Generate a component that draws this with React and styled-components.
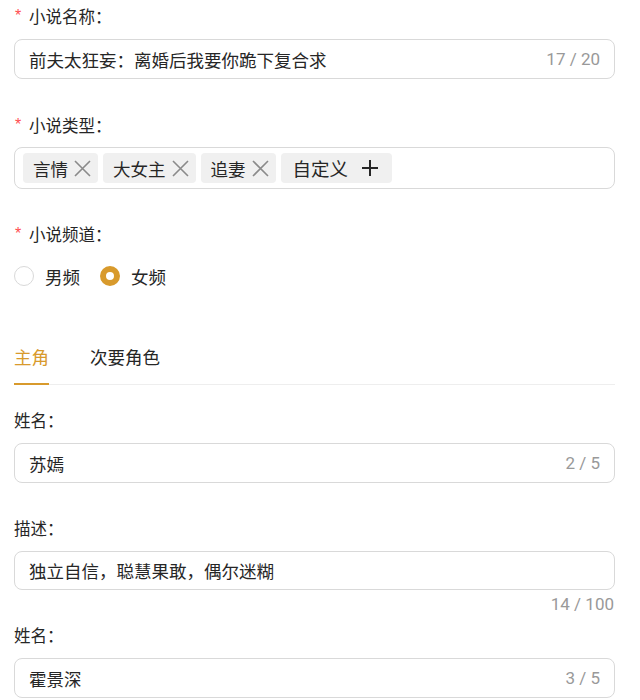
import React, { useState } from 'react';
import styled, { createGlobalStyle } from 'styled-components';

const ORANGE = '#d89a2c';

const GlobalStyle = createGlobalStyle`
  body {
    margin: 0;
    background: #fff;
    font-family: "Noto Sans CJK SC", "Noto Sans", sans-serif;
    color: #262626;
  }
`;

const Page = styled.div`
  width: 601px;
  padding: 4px 25px 0 14px;
`;

const FormItem = styled.div`
  margin-bottom: ${({ gap }) => (gap === undefined ? 34 : gap)}px;
`;

const Label = styled.div`
  font-size: 16.5px;
  line-height: 24px;
  margin-bottom: ${({ gap }) => (gap === undefined ? 11 : gap)}px;
  display: flex;
  align-items: center;
`;

const Star = styled.span`
  color: #ff4d4f;
  font-family: "Liberation Sans", sans-serif;
  font-size: 16px;
  width: 15px;
  padding-left: 1px;
  box-sizing: border-box;
`;

const InputBox = styled.div`
  box-sizing: border-box;
  height: ${({ h }) => h || 40}px;
  border: 1px solid #d9d9d9;
  border-radius: 8px;
  display: flex;
  align-items: center;
  justify-content: space-between;
  padding: 0 14px;
  font-size: 17.5px;
`;

const Value = styled.span`
  color: #262626;
`;

const Count = styled.span`
  font-family: Roboto, "Liberation Sans", sans-serif;
  font-size: 17px;
  color: #999;
`;

const CountBelow = styled.div`
  text-align: right;
  font-family: Roboto, "Liberation Sans", sans-serif;
  font-size: 17px;
  line-height: 22px;
  color: #999;
  margin-top: 3px;
  padding-right: 1px;
`;

const TagBox = styled.div`
  box-sizing: border-box;
  border: 1px solid #d9d9d9;
  border-radius: 8px;
  padding: 5px 8px;
  display: flex;
  gap: 5px;
`;

const Tag = styled.div`
  height: 30px;
  background: #f0f0f0;
  border-radius: 4px;
  display: flex;
  align-items: center;
  padding: 0 ${({ custom }) => (custom ? 13 : 6)}px 0 ${({ custom }) => (custom ? 12 : 10)}px;
  gap: ${({ custom }) => (custom ? 13 : 5)}px;
  font-size: ${({ custom }) => (custom ? 18.5 : 17.5)}px;
  color: #262626;
`;

const RadioRow = styled.div`
  height: 40px;
  display: flex;
  align-items: center;
`;

const RadioItem = styled.label`
  display: flex;
  align-items: center;
  gap: 11px;
  font-size: 17.5px;
  margin-right: 20px;
  cursor: pointer;
`;

const RadioCircle = styled.span`
  box-sizing: border-box;
  width: 20px;
  height: 20px;
  border-radius: 50%;
  border: ${({ checked }) => (checked ? `6.5px solid ${ORANGE}` : '1px solid #d9d9d9')};
  background: #fff;
`;

const TabBar = styled.div`
  margin-top: 37px;
  display: flex;
  gap: 41px;
  border-bottom: 1px solid #eee;
  margin-bottom: 23px;
`;

const Tab = styled.div`
  font-size: 17.5px;
  line-height: 24px;
  padding: 12px 0 14px;
  margin-bottom: -1px;
  color: ${({ active }) => (active ? ORANGE : '#262626')};
  border-bottom: 2px solid ${({ active }) => (active ? ORANGE : 'transparent')};
  cursor: pointer;
`;

function CloseIcon() {
  return (
    <svg width="19" height="19" viewBox="0 0 19 19">
      <path d="M2 2 L17 17 M17 2 L2 17" stroke="#8a8a8a" strokeWidth="1.6" fill="none" />
    </svg>
  );
}

function PlusIcon() {
  return (
    <svg width="18" height="18" viewBox="0 0 18 18">
      <path d="M9 1 V17 M1 9 H17" stroke="#262626" strokeWidth="2" fill="none" />
    </svg>
  );
}

const tags = ['言情', '大女主', '追妻'];

export default function App() {
  const [channel, setChannel] = useState('female');
  const [tab, setTab] = useState(0);

  return (
    <>
      <GlobalStyle />
      <Page>
        <FormItem>
          <Label><Star>*</Star>小说名称：</Label>
          <InputBox>
            <Value>前夫太狂妄：离婚后我要你跪下复合求</Value>
            <Count>17 / 20</Count>
          </InputBox>
        </FormItem>

        <FormItem gap={33}>
          <Label gap={10}><Star>*</Star>小说类型：</Label>
          <TagBox>
            {tags.map((t) => (
              <Tag key={t}>
                {t}
                <CloseIcon />
              </Tag>
            ))}
            <Tag custom>
              自定义
              <PlusIcon />
            </Tag>
          </TagBox>
        </FormItem>

        <FormItem gap={0}>
          <Label gap={10}><Star>*</Star>小说频道：</Label>
          <RadioRow>
            <RadioItem onClick={() => setChannel('male')}>
              <RadioCircle checked={channel === 'male'} />
              男频
            </RadioItem>
            <RadioItem onClick={() => setChannel('female')}>
              <RadioCircle checked={channel === 'female'} />
              女频
            </RadioItem>
          </RadioRow>
        </FormItem>

        <TabBar>
          <Tab active={tab === 0} onClick={() => setTab(0)}>主角</Tab>
          <Tab active={tab === 1} onClick={() => setTab(1)}>次要角色</Tab>
        </TabBar>

        <FormItem gap={33}>
          <Label>姓名：</Label>
          <InputBox>
            <Value>苏嫣</Value>
            <Count>2 / 5</Count>
          </InputBox>
        </FormItem>

        <FormItem gap={8}>
          <Label>描述：</Label>
          <InputBox h={39}>
            <Value>独立自信，聪慧果敢，偶尔迷糊</Value>
          </InputBox>
          <CountBelow>14 / 100</CountBelow>
        </FormItem>

        <FormItem>
          <Label>姓名：</Label>
          <InputBox>
            <Value>霍景深</Value>
            <Count>3 / 5</Count>
          </InputBox>
        </FormItem>
      </Page>
    </>
  );
}
